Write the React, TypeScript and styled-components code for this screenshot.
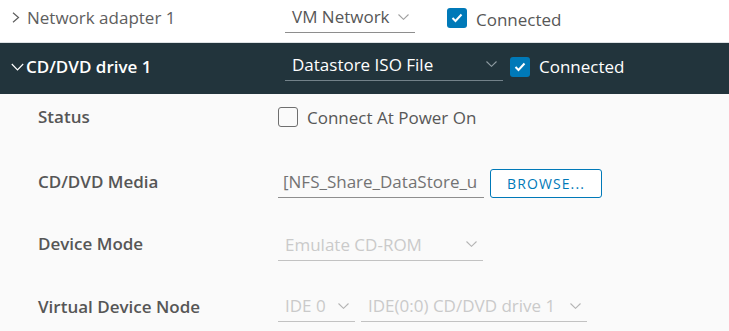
import React from 'react';
import styled, { createGlobalStyle } from 'styled-components';

const GlobalStyle = createGlobalStyle`
    html, body {
        margin: 0;
        padding: 0;
        background: #fafafa;
    }
    body {
        font-family: "Open Sans", "Liberation Sans", sans-serif;
        font-size: 17px;
        -webkit-font-smoothing: antialiased;
    }
`

const Page = styled.div`
    width: 729px;
    height: 331px;
    overflow: hidden;
    background: #fafafa;
`

const Row = styled.div<{ $dark?: boolean }>`
    display: grid;
    grid-template-columns: 285px 1fr;
    align-items: center;
    box-sizing: border-box;
    height: ${( p ) => p.$dark ? '51px' : '43px'};
    padding-bottom: 4px;
    background: ${( p ) => p.$dark ? '#22343c' : '#ffffff'};
    border-bottom: ${( p ) => p.$dark ? 'none' : '1px solid #dde1e4'};
`

const Title = styled.div<{ $dark?: boolean }>`
    display: flex;
    align-items: center;
    gap: ${( p ) => p.$dark ? '2px' : '7px'};
    padding-left: ${( p ) => p.$dark ? '11px' : '12px'};
    padding-bottom: ${( p ) => p.$dark ? '0' : '4px'};
    font-weight: ${( p ) => p.$dark ? 600 : 400};
    color: ${( p ) => p.$dark ? '#ffffff' : '#5e5e5e'};
`

const Controls = styled.div<{ $gap: number }>`
    display: flex;
    align-items: center;
    gap: ${( p ) => p.$gap}px;
`

const Select = styled.div<{ $w: number; $dark?: boolean; $disabled?: boolean }>`
    display: flex;
    align-items: center;
    justify-content: space-between;
    box-sizing: border-box;
    width: ${( p ) => p.$w}px;
    height: 28px;
    padding: 0 6px 4px 7px;
    color: ${( p ) => p.$dark ? '#ffffff' : p.$disabled ? '#cacaca' : '#575757'};
    border-bottom: 1px solid ${( p ) => p.$dark ? '#73828a' : p.$disabled ? '#c2c2c2' : '#8e8e8e'};
    white-space: nowrap;
    overflow: hidden;
`

const Check = styled.span<{ $on?: boolean; $lift?: number }>`
    display: inline-flex;
    align-items: center;
    justify-content: center;
    width: 20px;
    height: 20px;
    box-sizing: border-box;
    margin-bottom: ${( p ) => p.$lift ?? 0}px;
    border-radius: 3px;
    background: ${( p ) => p.$on ? '#0079b8' : 'transparent'};
    border: ${( p ) => p.$on ? 'none' : '1px solid #6f6f6f'};
    flex-shrink: 0;
`

const CheckLabel = styled.label<{ $dark?: boolean }>`
    display: flex;
    align-items: center;
    gap: 9px;
    color: ${( p ) => p.$dark ? '#ffffff' : '#575757'};
`

const Body = styled.div`
    padding-top: 11px;
`

const Field = styled.div<{ $top: number }>`
    display: grid;
    grid-template-columns: 278px 1fr;
    align-items: center;
    margin-top: ${( p ) => p.$top}px;
`

const Label = styled.div<{ $lift?: number }>`
    padding: 0 0 ${( p ) => p.$lift ?? 4}px 38px;
    font-weight: 600;
    color: #565656;
`

const Input = styled.input`
    box-sizing: border-box;
    width: 206px;
    height: 28px;
    padding: 0 6px 4px 5px;
    border: none;
    border-bottom: 1px solid #8e8e8e;
    background: transparent;
    font-family: "Open Sans", "Liberation Sans", sans-serif;
    font-size: 17px;
    color: #737373;
    outline: none;
`

const Button = styled.button`
    width: 112px;
    height: 29px;
    border: 1px solid #0079b8;
    border-radius: 3px;
    background: #ffffff;
    color: #0079b8;
    font-family: "Open Sans", "Liberation Sans", sans-serif;
    font-size: 14px;
    letter-spacing: 1.1px;
    padding: 0;
`

function Caret( { color }: { color: string } ) {
    return (
        <svg width={11} height={6} viewBox='0 0 11 6' style={{ flexShrink: 0 }}>
            <polyline points='0.5,0.5 5.5,5.3 10.5,0.5' fill='none' stroke={color} strokeWidth='1.1'/>
        </svg>
    )
}

function Tick() {
    return (
        <svg width={12} height={10} viewBox='0 0 12 10'>
            <polyline points='1.5,5 4.5,8 10.5,1.5' fill='none' stroke='#ffffff' strokeWidth='2'/>
        </svg>
    )
}

export default function App(): JSX.Element {
    return (
        <Page>
            <GlobalStyle/>
            <Row>
                <Title>
                    <svg width={8} height={11} viewBox='0 0 8 11'>
                        <polyline points='1,0.8 6.5,5.5 1,10.2' fill='none' stroke='#5e5e5e' strokeWidth='1.2'/>
                    </svg>
                    Network adapter 1
                </Title>
                <Controls $gap={32}>
                    <Select $w={130}>VM Network <Caret color='#a0a0a0'/></Select>
                    <CheckLabel><Check $on $lift={3}><Tick/></Check>Connected</CheckLabel>
                </Controls>
            </Row>
            <Row $dark>
                <Title $dark>
                    <svg width={13} height={8} viewBox='0 0 13 8'>
                        <polyline points='0.8,1 6.5,6.8 12.2,1' fill='none' stroke='#ffffff' strokeWidth='1.2'/>
                    </svg>
                    CD/DVD drive 1
                </Title>
                <Controls $gap={7}>
                    <Select $w={218} $dark>Datastore ISO File <Caret color='#8f9ca2'/></Select>
                    <CheckLabel $dark><Check $on><Tick/></Check>Connected</CheckLabel>
                </Controls>
            </Row>
            <Body>
                <Field $top={0}>
                    <Label $lift={2}>Status</Label>
                    <CheckLabel><Check $lift={2}/>Connect At Power On</CheckLabel>
                </Field>
                <Field $top={39}>
                    <Label>CD/DVD Media</Label>
                    <Controls $gap={6}>
                        <Input readOnly value='[NFS_Share_DataStore_ubuntu.iso'/>
                        <Button>BROWSE...</Button>
                    </Controls>
                </Field>
                <Field $top={34}>
                    <Label $lift={6}>Device Mode</Label>
                    <Select $w={205} $disabled>Emulate CD-ROM <Caret color='#b4b4b4'/></Select>
                </Field>
                <Field $top={33}>
                    <Label>Virtual Device Node</Label>
                    <Controls $gap={6}>
                        <Select $w={77} $disabled>IDE 0 <Caret color='#b4b4b4'/></Select>
                        <Select $w={226} $disabled>IDE(0:0) CD/DVD drive 1 <Caret color='#b4b4b4'/></Select>
                    </Controls>
                </Field>
            </Body>
        </Page>
    )
}
